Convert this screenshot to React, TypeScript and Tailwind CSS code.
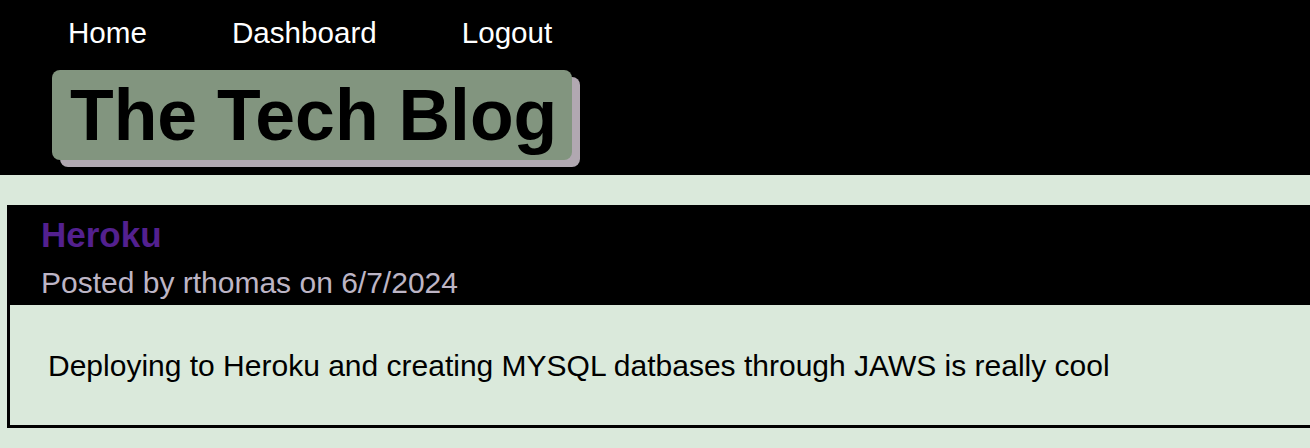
export default function App() {
  return (
    <div className="min-h-[448px] bg-[#dae9db] font-['Liberation_Sans',Arial,sans-serif] overflow-hidden">
      <header className="bg-black h-[175px] pt-[14px]">
        <nav className="flex pl-[68px] gap-[85px] text-[29.6px] leading-[38px] text-white">
          <a href="#">Home</a>
          <a href="#">Dashboard</a>
          <a href="#">Logout</a>
        </nav>
        <div className="ml-[52px] mt-[18px] inline-block">
          <h1 className="bg-[#82957f] rounded-lg shadow-[8px_7px_0_#b1a8b1] h-[90px] pl-[18px] pr-[15px] text-[71.5px] leading-[90px] font-bold text-black">
            The Tech Blog
          </h1>
        </div>
      </header>
      <main className="pt-[30px] pl-[7px]">
        <article className="w-[1320px]">
          <div className="bg-black h-[97px] pl-[34px] pt-[10px]">
            <h3 className="text-[35px] leading-[40px] font-bold text-[#53208f]">Heroku</h3>
            <p className="mt-[11px] text-[30px] leading-[34px] text-[#bdb5c5]">Posted by rthomas on 6/7/2024</p>
          </div>
          <div className="border-[3px] border-black h-[126px] pl-[38px] flex items-center">
            <p className="text-[30px] text-black">
              Deploying to Heroku and creating MYSQL datbases through JAWS is really cool
            </p>
          </div>
        </article>
      </main>
    </div>
  )
}
